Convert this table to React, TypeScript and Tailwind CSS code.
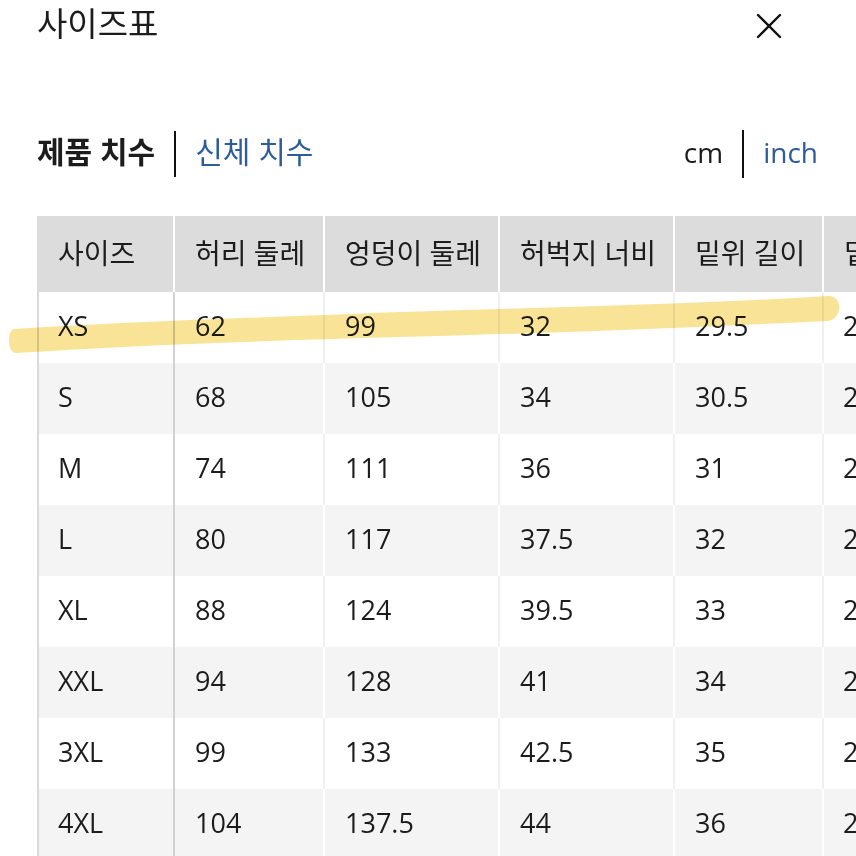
import React from "react";

type Row = { size: string; values: string[]; shaded: boolean };

const headers = ["사이즈", "허리 둘레", "엉덩이 둘레", "허벅지 너비", "밑위 길이", "밑단 둘레"];

const rows: Row[] = [
  { size: "XS", values: ["62", "99", "32", "29.5", "21"], shaded: false },
  { size: "S", values: ["68", "105", "34", "30.5", "22"], shaded: true },
  { size: "M", values: ["74", "111", "36", "31", "23"], shaded: false },
  { size: "L", values: ["80", "117", "37.5", "32", "24"], shaded: true },
  { size: "XL", values: ["88", "124", "39.5", "33", "25"], shaded: false },
  { size: "XXL", values: ["94", "128", "41", "34", "26"], shaded: true },
  { size: "3XL", values: ["99", "133", "42.5", "35", "27"], shaded: false },
  { size: "4XL", values: ["104", "137.5", "44", "36", "28"], shaded: true },
];

// widths of columns 2..5 incl. their 2px right separator
const colWidths = ["w-[150px]", "w-[175px]", "w-[175px]", "w-[149px]"];

const font = { fontFamily: '"Open Sans", "Noto Sans CJK KR", sans-serif' };

function Highlight() {
  return (
    <svg
      className="pointer-events-none absolute left-0 top-0 mix-blend-multiply"
      width="856"
      height="856"
      viewBox="0 0 856 856"
    >
      <path
        d="M14 329 C 120 322, 250 318, 400 312 C 560 307, 700 304, 828 296 C 843 295, 843 319, 828 321 C 700 327, 560 333, 400 337 C 250 341, 120 346, 16 353 C 7 353, 7 330, 14 329 Z"
        fill="#f7e08c"
        opacity="0.9"
      />
    </svg>
  );
}

export default function App() {
  return (
    <div className="relative h-[856px] w-[856px] overflow-hidden bg-white text-[#1c1c1c]" style={font}>
      {/* Title */}
      <div className="flex h-[50px] items-center justify-between pl-[37px] pr-[74px]">
        <h1 className="-mt-[3px] text-[33px] leading-none">사이즈표</h1>
        <svg width="26" height="26" viewBox="0 0 26 26" className="mt-[2px]">
          <path d="M2 2 L24 24 M24 2 L2 24" stroke="#111" strokeWidth="2.4" strokeLinecap="round" />
        </svg>
      </div>

      {/* Tabs */}
      <div className="mt-[80px] flex h-[48px] items-center justify-between pl-[37px] pr-[38px]">
        <div className="flex items-center">
          <span className="-mt-[4px] text-[30px] font-bold leading-none">제품 치수</span>
          <span className="mx-[19px] h-[46px] w-[2px] bg-[#111]" />
          <span className="-mt-[4px] text-[30px] leading-none text-[#2c5c9c]">신체 치수</span>
        </div>
        <div className="flex items-center">
          <span className="-mt-[4px] text-[28px] leading-none">cm</span>
          <span className="mx-[19px] h-[48px] w-[2px] bg-[#111]" />
          <span className="-mt-[4px] text-[28px] leading-none text-[#2c5c9c]">inch</span>
        </div>
      </div>

      {/* Table */}
      <div className="mt-[38px] ml-[37px] overflow-hidden">
        <div className="flex h-[76px] w-[960px] whitespace-nowrap bg-[#dcdcdc] text-[28px]">
          <div className="flex w-[138px] shrink-0 items-center border-r-[2px] border-white pb-[3px] pl-[21px]">{headers[0]}</div>
          {headers.slice(1, 5).map((h, i) => (
            <div key={h} className={`flex ${colWidths[i]} shrink-0 items-center border-r-[2px] border-white pb-[3px] pl-[20px]`}>
              {h}
            </div>
          ))}
          <div className="flex flex-1 items-center pb-[3px] pl-[20px]">{headers[5]}</div>
        </div>

        {rows.map((r) => (
          <div
            key={r.size}
            className={`flex h-[71px] w-[960px] border-l-[2px] border-[#dadada] text-[27px] ${r.shaded ? "bg-[#f4f4f4]" : "bg-white"}`}
          >
            <div className="flex w-[136px] shrink-0 items-center border-r-[2px] border-[#d2d2d2] pb-[3px] pl-[19px]">{r.size}</div>
            {r.values.slice(0, 4).map((v, i) => (
              <div
                key={i}
                className={`flex ${colWidths[i]} shrink-0 items-center border-r-[2px] pb-[3px] pl-[20px] ${r.shaded ? "border-white" : "border-[#f0f0f0]"}`}
              >
                {v}
              </div>
            ))}
            <div className="flex flex-1 items-center pb-[3px] pl-[19px]">{r.values[4]}</div>
          </div>
        ))}
      </div>

      <Highlight />
    </div>
  );
}
